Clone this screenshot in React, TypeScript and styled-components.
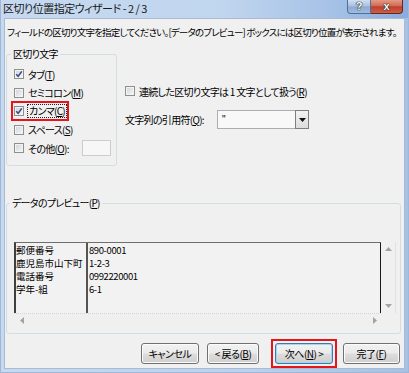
import styled, { createGlobalStyle, css } from "styled-components";

const UI_FONT = `"Noto Sans CJK JP", "Liberation Sans", sans-serif`;

const GlobalStyle = createGlobalStyle`
  html, body { margin: 0; padding: 0; }
  body {
    background: #c4d8ee;
    font-family: ${UI_FONT};
    font-size: 10px;
    color: #000;
    font-feature-settings: "palt";
    letter-spacing: -0.7px;
  }
`;

const Window = styled.div`
  width: 409px;
  height: 373px;
  box-sizing: border-box;
  display: flex;
  flex-direction: column;
  background: linear-gradient(to right, #c6d9ef, #bcd2ec 60%, #a6c1e4);
  border: 1px solid #9fb8da;
  border-top: 0;
  padding: 0 3px 3px 3px;
  overflow: hidden;
`;

const TitleBar = styled.div`
  height: 18px;
  margin: 0 -3px;
  display: flex;
  justify-content: space-between;
  align-items: flex-start;
  background: linear-gradient(to right, #c6d9f0 0%, #c0d5ee 55%, #a5c1e6 82%, #89acdb 100%);
`;

const Title = styled.span`
  padding-left: 2px;
  line-height: 17px;
  font-size: 11px;
  letter-spacing: -0.5px;
  color: #1a1a1a;
`;

const Caption = styled.div`
  display: flex;
  margin-right: 5px;
`;

const CaptionButton = styled.span<{ $close?: boolean }>`
  width: ${(p) => (p.$close ? 32 : 24)}px;
  height: 14px;
  box-sizing: border-box;
  display: flex;
  align-items: center;
  justify-content: center;
  font-family: "Liberation Sans", sans-serif;
  font-weight: bold;
  font-size: 11px;
  letter-spacing: 0;
  line-height: 1;
  color: #fff;
  text-shadow: 0 0 1px #122, 0 0 1px #122, 0 0 1px #122;
  border: 1px solid ${(p) => (p.$close ? "#6e2419" : "#4f6f9f")};
  border-top: 0;
  ${(p) =>
    p.$close
      ? css`
          border-left: 0;
          border-radius: 0 0 4px 0;
          background: linear-gradient(#e49a86, #d26a55 45%, #bd3f2b 52%, #cb604a);
        `
      : css`
          border-radius: 0 0 0 4px;
          background: linear-gradient(#d0def0, #a8bfdf 48%, #8ca9d1 52%, #a2bce0);
        `}
`;

const Client = styled.div`
  flex: 1;
  display: flex;
  flex-direction: column;
  background: #f0f0f0;
  border: 1px solid #a9bbd3;
  padding: 6px 2px 0 1px;
`;

const Instruction = styled.div`
  margin-left: 1px;
  line-height: 14px;
  font-size: 9.5px;
  letter-spacing: -0.8px;
  white-space: nowrap;
`;

const Upper = styled.div`
  display: flex;
  gap: 8px;
  margin-top: 8px;
`;

const Group = styled.fieldset<{ $w: number; $h: number }>`
  margin: 0;
  min-width: 0;
  box-sizing: border-box;
  width: ${(p) => p.$w}px;
  height: ${(p) => p.$h}px;
  border: 1px solid #d3dde4;
  border-radius: 3px;
  padding: 0 3px 0 4px;
`;

const Legend = styled.legend`
  padding: 0 2px;
  line-height: 14px;
`;

const CheckList = styled.div`
  padding-top: 4px;
  display: flex;
  flex-direction: column;
`;

const CheckRow = styled.div`
  height: 18.5px;
  display: flex;
  align-items: center;
  margin-left: 3px;
`;

const CheckLabel = styled.span<{ $marked?: boolean }>`
  display: inline-flex;
  align-items: center;
  gap: 4px;
  height: 14px;
  ${(p) =>
    p.$marked &&
    css`
      outline: 2px solid #e8141c;
      outline-offset: 1px;
    `}
`;

const Focus = styled.span`
  outline: 1px dotted #222;
  outline-offset: 0;
  padding: 0 1px;
  line-height: 12px;
`;

const Box = styled.span`
  width: 10px;
  height: 10px;
  box-sizing: border-box;
  flex: none;
  border: 1px solid #8e8f8f;
  background: linear-gradient(135deg, #cfd3d8, #f7f7f7);
  box-shadow: inset 0 0 0 1px #f3f3f3;
  display: flex;
  align-items: center;
  justify-content: center;
`;

const U = styled.span`
  text-decoration: underline;
  text-underline-offset: 1px;
`;

const OtherBox = styled.span`
  width: 29px;
  height: 16px;
  box-sizing: border-box;
  margin: 0 2px 0 auto;
  border: 1px solid #c9cdd2;
  background: #f7f7f7;
`;

const Options = styled.div`
  padding-top: 37px;
  display: flex;
  flex-direction: column;
  gap: 12px;
`;

const OptionRow = styled.div`
  height: 14px;
  display: flex;
  align-items: center;
  gap: 4px;
`;

const QuoteRow = styled.div`
  display: grid;
  grid-template-columns: 92px 92px;
  align-items: center;
`;

const Select = styled.div`
  height: 19px;
  box-sizing: border-box;
  display: flex;
  border: 1px solid #abadb3;
  background: #f8f8f8;
`;

const SelectValue = styled.span`
  flex: 1;
  padding-left: 4px;
  line-height: 17px;
  font-family: "Liberation Sans", sans-serif;
`;

const SelectButton = styled.span`
  width: 14px;
  box-sizing: border-box;
  border: 1px solid #7f7f7f;
  margin: -1px -1px -1px 0;
  background: linear-gradient(#f3f3f3, #dcdcdc);
  display: flex;
  align-items: center;
  justify-content: center;
`;

const PreviewGroup = styled(Group)`
  margin-top: 30px;
  padding: 0 3px;
`;

const Preview = styled.div`
  display: grid;
  grid-template-columns: 367px 15px;
  grid-template-rows: 71px 14px;
  margin: 32px 0 0 4px;
`;

const Table = styled.div`
  display: flex;
  border-top: 1px solid #6e6e6e;
  border-left: 2px solid #3f3f3f;
  border-right: 1px solid #1a1a1a;
  background: #f2f2f2;
  font-feature-settings: normal;
  letter-spacing: 0;
  font-size: 9.5px;
`;

const Column = styled.div<{ $w?: number }>`
  ${(p) => (p.$w ? `width: ${p.$w}px; border-right: 2px solid #555;` : "flex: 1; padding-left: 1px;")}
  display: flex;
  flex-direction: column;
  padding-top: 0.5px;
  overflow: hidden;
`;

const Cell = styled.span<{ $num?: boolean }>`
  line-height: 13px;
  white-space: nowrap;
  ${(p) => p.$num && "letter-spacing: -0.4px;"}
`;

const VScroll = styled.div`
  display: flex;
  flex-direction: column;
  justify-content: space-between;
  align-items: center;
  padding: 5px 0 5px;
  border-right: 1px solid #dde2e8;
`;

const HScroll = styled.div`
  display: flex;
  justify-content: space-between;
  align-items: center;
  padding: 0 4px 0 6px;
  border-top: 1px dotted #cdd5df;
`;

const ButtonRow = styled.div`
  display: flex;
  justify-content: flex-end;
  align-items: center;
  margin-top: 5px;
  padding-right: 2px;
`;

const Marker = styled.span<{ $gap: number }>`
  display: flex;
  margin-left: ${(p) => p.$gap}px;
  border: 2px solid #e8141c;
  padding: 2px;
`;

const Button = styled.button<{ $w: number; $gap?: number; $default?: boolean }>`
  width: ${(p) => p.$w}px;
  height: 21px;
  margin-left: ${(p) => p.$gap ?? 0}px;
  box-sizing: border-box;
  padding: 0;
  font: inherit;
  letter-spacing: -0.5px;
  color: #000;
  border: 1px solid ${(p) => (p.$default ? "#3d7bad" : "#707070")};
  border-radius: 3px;
  background: linear-gradient(#f2f2f2 0%, #ebebeb 48%, #dddddd 52%, #cfcfcf 100%);
  box-shadow: inset 0 0 0 1px ${(p) => (p.$default ? "#9ed8f3" : "#fbfbfb")};
`;

function Check({ on }: { on?: boolean }) {
  return (
    <Box>
      {on && (
        <svg width="8" height="8" viewBox="0 0 8 8">
          <path d="M1.2 4.2 L3.2 6.3 L6.8 1.4" fill="none" stroke="#3a4d86" strokeWidth="1.6" />
        </svg>
      )}
    </Box>
  );
}

function Arrow({ dir, color = "#a3a3a3" }: { dir: "up" | "down" | "left" | "right"; color?: string }) {
  const pts = {
    up: "0,4 3.5,0 7,4",
    down: "0,0 7,0 3.5,4",
    left: "4,0 4,7 0,3.5",
    right: "0,0 0,7 4,3.5",
  }[dir];
  const horiz = dir === "left" || dir === "right";
  return (
    <svg width={horiz ? 4 : 7} height={horiz ? 7 : 4} viewBox={horiz ? "0 0 4 7" : "0 0 7 4"}>
      <polygon points={pts} fill={color} />
    </svg>
  );
}

const rows = [
  ["郵便番号", "890-0001"],
  ["鹿児島市山下町", "1-2-3"],
  ["電話番号", "0992220001"],
  ["学年-組", "6-1"],
];

export default function App() {
  return (
    <>
      <GlobalStyle />
      <Window>
        <TitleBar>
          <Title>区切り位置指定ウィザード - 2 / 3</Title>
          <Caption>
            <CaptionButton>?</CaptionButton>
            <CaptionButton $close>x</CaptionButton>
          </Caption>
        </TitleBar>
        <Client>
          <Instruction>
            フィールドの区切り文字を指定してください。[データのプレビュー] ボックスには区切り位置が表示されます。
          </Instruction>
          <Upper>
            <Group $w={111} $h={119}>
              <Legend>区切り文字</Legend>
              <CheckList>
                <CheckRow>
                  <CheckLabel>
                    <Check on />
                    <span>タブ(<U>T</U>)</span>
                  </CheckLabel>
                </CheckRow>
                <CheckRow>
                  <CheckLabel>
                    <Check />
                    <span>セミコロン(<U>M</U>)</span>
                  </CheckLabel>
                </CheckRow>
                <CheckRow>
                  <CheckLabel $marked>
                    <Check on />
                    <Focus>カンマ(<U>C</U>)</Focus>
                  </CheckLabel>
                </CheckRow>
                <CheckRow>
                  <CheckLabel>
                    <Check />
                    <span>スペース(<U>S</U>)</span>
                  </CheckLabel>
                </CheckRow>
                <CheckRow>
                  <CheckLabel>
                    <Check />
                    <span>その他(<U>O</U>):</span>
                  </CheckLabel>
                  <OtherBox />
                </CheckRow>
              </CheckList>
            </Group>
            <Options>
              <OptionRow>
                <Check />
                <span>連続した区切り文字は 1 文字として扱う(<U>R</U>)</span>
              </OptionRow>
              <QuoteRow>
                <span>文字列の引用符(<U>Q</U>):</span>
                <Select>
                  <SelectValue>"</SelectValue>
                  <SelectButton>
                    <Arrow dir="down" color="#111" />
                  </SelectButton>
                </Select>
              </QuoteRow>
            </Options>
          </Upper>
          <PreviewGroup $w={395} $h={138}>
            <Legend>データのプレビュー(<U>P</U>)</Legend>
            <Preview>
              <Table>
                <Column $w={70}>
                  {rows.map(([a]) => (
                    <Cell key={a}>{a}</Cell>
                  ))}
                </Column>
                <Column>
                  {rows.map(([a, b]) => (
                    <Cell key={a} $num>
                      {b}
                    </Cell>
                  ))}
                </Column>
              </Table>
              <VScroll>
                <Arrow dir="up" />
                <Arrow dir="down" />
              </VScroll>
              <HScroll>
                <Arrow dir="left" />
                <Arrow dir="right" />
              </HScroll>
            </Preview>
          </PreviewGroup>
          <ButtonRow>
            <Button $w={58}>キャンセル</Button>
            <Button $w={52} $gap={8}>&lt; 戻る(<U>B</U>)</Button>
            <Marker $gap={12}>
              <Button $w={58} $default>
                次へ(<U>N</U>) &gt;
              </Button>
            </Marker>
            <Button $w={57} $gap={6}>完了(<U>F</U>)</Button>
          </ButtonRow>
        </Client>
      </Window>
    </>
  );
}
